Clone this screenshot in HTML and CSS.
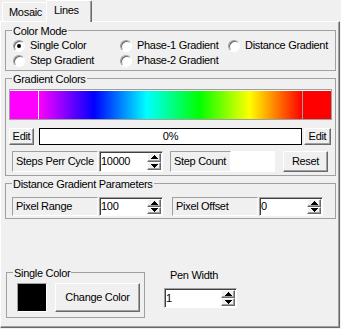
FILE: index.html
```html
<!DOCTYPE html>
<html lang="en">
<head>
  <meta charset="UTF-8" />
  <title>Lines</title>
  <link rel="stylesheet" href="styles.css">
</head>
<body>

  <div class="tabs">
    <div class="tab">Mosaic</div>
    <div class="tab tab-active">Lines</div>
  </div>

  <div class="page">

    <fieldset class="group group-mode">
      <legend>Color Mode</legend>
      <div class="modes">
        <label class="radio"><span class="radio-ring checked"></span>Single Color</label>
        <label class="radio"><span class="radio-ring"></span>Phase-1 Gradient</label>
        <label class="radio"><span class="radio-ring"></span>Distance Gradient</label>
        <label class="radio"><span class="radio-ring"></span>Step Gradient</label>
        <label class="radio"><span class="radio-ring"></span>Phase-2 Gradient</label>
      </div>
    </fieldset>

    <fieldset class="group group-gradient">
      <legend>Gradient Colors</legend>
      <div class="ramp-bar">
        <div class="swatch swatch-start"></div>
        <div class="swatch-ramp"></div>
        <div class="swatch swatch-end"></div>
      </div>
      <div class="edit-row">
        <button class="btn btn-edit">Edit</button>
        <div class="progress">0%</div>
        <button class="btn btn-edit btn-edit-right">Edit</button>
      </div>
      <div class="field-row">
        <div class="panel panel-wide">Steps Perr Cycle</div>
        <div class="spin">
          <span class="spin-value">10000</span>
          <span class="spin-btns">
            <span class="spin-btn"><svg width="7" height="4"><polygon points="0,4 7,4 3.5,0" /></svg></span>
            <span class="spin-btn"><svg width="7" height="4"><polygon points="0,0 7,0 3.5,4" /></svg></span>
          </span>
        </div>
        <div class="panel panel-count">Step Count</div>
        <div class="readout"></div>
        <button class="btn btn-reset">Reset</button>
      </div>
    </fieldset>

    <fieldset class="group group-distance">
      <legend>Distance Gradient Parameters</legend>
      <div class="field-row field-row-small">
        <div class="panel panel-wide">Pixel Range</div>
        <div class="spin">
          <span class="spin-value">100</span>
          <span class="spin-btns">
            <span class="spin-btn"><svg width="7" height="4"><polygon points="0,4 7,4 3.5,0" /></svg></span>
            <span class="spin-btn"><svg width="7" height="4"><polygon points="0,0 7,0 3.5,4" /></svg></span>
          </span>
        </div>
        <div class="panel panel-wide panel-offset">Pixel Offset</div>
        <div class="spin">
          <span class="spin-value">0</span>
          <span class="spin-btns">
            <span class="spin-btn"><svg width="7" height="4"><polygon points="0,4 7,4 3.5,0" /></svg></span>
            <span class="spin-btn"><svg width="7" height="4"><polygon points="0,0 7,0 3.5,4" /></svg></span>
          </span>
        </div>
      </div>
    </fieldset>

    <div class="bottom">
      <fieldset class="group group-single">
        <legend>Single Color</legend>
        <div class="single-body">
          <div class="color-well"></div>
          <button class="btn btn-change">Change Color</button>
        </div>
      </fieldset>

      <div class="pen">
        <div class="pen-label">Pen Width</div>
        <div class="spin spin-pen">
          <span class="spin-value">1</span>
          <span class="spin-btns">
            <span class="spin-btn"><svg width="7" height="4"><polygon points="0,4 7,4 3.5,0" /></svg></span>
            <span class="spin-btn"><svg width="7" height="4"><polygon points="0,0 7,0 3.5,4" /></svg></span>
          </span>
        </div>
      </div>
    </div>

  </div>

</body>
</html>
```

FILE: styles.css
```css
* {
  box-sizing: border-box;
}

body {
  margin: 0;
  width: 341px;
  height: 329px;
  overflow: hidden;
  background-color: #f0f0f0;
  color: #000;
  font-family: "Liberation Sans", Arial, sans-serif;
  font-size: 11px;
  letter-spacing: -0.3px;
  line-height: 13px;
}

/* tab strip */

.tabs {
  display: flex;
  align-items: flex-end;
  height: 21px;
  padding-left: 2px;
}

.tab {
  width: 44px;
  height: 19px;
  padding: 3px 0 0 6px;
  border-top: 1px solid #fff;
  border-left: 1px solid #fff;
  border-top-left-radius: 2px;
}

.tab-active {
  position: relative;
  z-index: 1;
  width: 46px;
  height: 22px;
  margin-bottom: -1px;
  padding: 3px 0 0 7px;
  background-color: #f0f0f0;
  border-right: 1px solid #696969;
  border-top-right-radius: 2px;
  box-shadow: inset -1px 0 0 #a0a0a0;
}

.page {
  display: flex;
  flex-direction: column;
  width: 340px;
  height: 307px;
  padding: 0 3px 9px 4px;
  border: 1px solid;
  border-color: #fff #696969 #696969 #fff;
  box-shadow: inset -1px -1px 0 #a0a0a0;
}

/* group boxes */

.group {
  margin: 0;
  padding: 0;
  min-width: 0;
  border: 1px solid #a0a0a0;
}

.group legend {
  margin-left: 6px;
  padding: 2px 1px 0;
  line-height: 13px;
}

.group-mode {
  margin-top: 1px;
  padding-bottom: 2px;
}

.group-gradient {
  padding-bottom: 3px;
}

.group-distance {
  padding-bottom: 2px;
}

/* radios */

.modes {
  display: grid;
  grid-template-columns: 107px 108px 1fr;
  grid-auto-rows: 15px;
  padding-left: 7px;
}

.radio {
  display: flex;
  align-items: center;
  gap: 5px;
  white-space: nowrap;
}

.radio-ring {
  display: flex;
  align-items: center;
  justify-content: center;
  flex: none;
  width: 12px;
  height: 12px;
  border-radius: 50%;
  border: 1px solid;
  border-color: #a0a0a0 #fff #fff #a0a0a0;
  background-color: #fff;
  box-shadow: inset 1px 1px 0 #696969;
}

.radio-ring.checked::after {
  content: "";
  width: 4px;
  height: 4px;
  border-radius: 50%;
  background-color: #000;
}

/* gradient bar */

.ramp-bar {
  display: flex;
  height: 31px;
  margin: 3px 3px 0;
  padding-top: 1px;
  border: 1px solid #a0a0a0;
  background-color: #fff;
}

.swatch {
  width: 28px;
}

.swatch-start {
  margin-right: 1px;
  background-color: #ff00ff;
}

.swatch-ramp {
  flex: 1;
  background: linear-gradient(to right, #ff00ff 0%, #0000ff 21%, #00ffff 41%, #00ff00 61%, #ffff00 80%, #ff0000 100%);
}

.swatch-end {
  width: 29px;
  border-left: 1px solid #a0a0a0;
  background-color: #ff0000;
}

/* buttons */

.btn {
  margin: 0;
  padding: 0;
  font: inherit;
  letter-spacing: inherit;
  color: #000;
  background-color: #f0f0f0;
  border: 1px solid;
  border-color: #fff #696969 #696969 #fff;
  box-shadow: inset -1px -1px 0 #a0a0a0;
  border-radius: 0;
}

.edit-row {
  display: flex;
  height: 17px;
  margin-top: 8px;
  padding: 0 4px 0 3px;
}

.btn-edit {
  width: 25px;
}

.btn-edit-right {
  width: 27px;
}

.progress {
  flex: 1;
  margin: 0 2px 0 5px;
  border: 1px solid #000;
  background-color: #fff;
  text-align: center;
  line-height: 15px;
}

/* label + spin rows */

.field-row {
  display: flex;
  height: 21px;
  margin-top: 6px;
  padding-left: 6px;
}

.field-row-small {
  height: 19px;
}

.panel {
  display: flex;
  align-items: center;
  padding-left: 3px;
  border: 1px solid;
  border-color: #a0a0a0 #fff #fff #a0a0a0;
  white-space: nowrap;
}

.panel-wide {
  width: 86px;
}

.panel-count {
  width: 61px;
  margin-left: 7px;
}

.panel-offset {
  margin-left: 9px;
}

.readout {
  width: 44px;
  background-color: #fff;
}

.btn-reset {
  width: 45px;
  margin-left: 8px;
}

.spin {
  display: flex;
  width: 64px;
  margin-left: 1px;
  padding: 1px 1px 1px 0;
  border: 1px solid;
  border-color: #a0a0a0 #fff #fff #a0a0a0;
  background-color: #fff;
  box-shadow: inset 1px 1px 0 #404040;
}

.spin-value {
  flex: 1;
  display: flex;
  align-items: center;
  padding-left: 1px;
}

.spin-btns {
  display: flex;
  flex-direction: column;
  width: 14px;
}

.spin-btn {
  flex: 1;
  display: flex;
  align-items: center;
  justify-content: center;
  background-color: #f0f0f0;
  border: 1px solid;
  border-color: #fff #696969 #696969 #fff;
  box-shadow: inset -1px -1px 0 #a0a0a0;
}

.spin-btn svg {
  display: block;
  shape-rendering: crispEdges;
}

/* bottom area */

.bottom {
  display: flex;
  align-items: flex-end;
  margin-top: auto;
}

.group-single {
  width: 139px;
  margin-left: 1px;
}

.single-body {
  display: flex;
  align-items: center;
  gap: 8px;
  height: 37px;
  padding: 2px 4px 5px 10px;
}

.color-well {
  width: 30px;
  height: 29px;
  border: 1px solid;
  border-color: #a0a0a0 #fff #fff #a0a0a0;
  background-color: #000;
}

.btn-change {
  width: 85px;
  height: 29px;
}

.pen {
  margin: 0 0 10px 19px;
}

.pen-label {
  margin-bottom: 6px;
  padding-left: 6px;
}

.spin-pen {
  width: 73px;
  height: 20px;
  margin-left: 0;
}
```
